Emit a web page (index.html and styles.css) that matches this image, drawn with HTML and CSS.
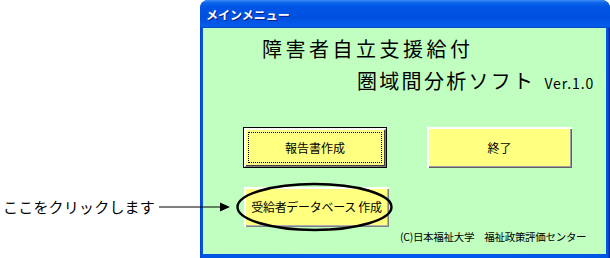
FILE: index.html
```html
<!DOCTYPE html>
<html lang="ja">
<head>
<meta charset="utf-8">
<title>メインメニュー</title>
<link rel="stylesheet" href="styles.css">
</head>
<body>
<div class="stage">
  <div class="window">
    <div class="titlebar"><span class="title">メインメニュー</span></div>
    <div class="client">
      <div class="head1">障害者自立支援給付</div>
      <div class="head2"><span class="head2-text">圏域間分析ソフト</span><span class="ver">Ver.1.0</span></div>
      <div class="btnrow">
        <button class="btn btn-default"><span class="focus">報告書作成</span></button>
        <button class="btn btn-exit">終了</button>
      </div>
      <div class="btnrow2">
        <button class="btn btn-db">受給者データベース 作成</button>
      </div>
      <div class="footer">(C)日本福祉大学　福祉政策評価センター</div>
    </div>
  </div>
  <div class="callout">ここをクリックします</div>
  <svg class="arrow" width="72" height="12" viewBox="0 0 72 12">
    <line x1="0" y1="6" x2="62" y2="6" stroke="#000" stroke-width="1"/>
    <polygon points="61,1.5 71,6 61,10.5" fill="#000"/>
  </svg>
  <svg class="ring" width="160" height="52" viewBox="0 0 160 52">
    <ellipse cx="78.5" cy="25" rx="77" ry="23" fill="none" stroke="#000" stroke-width="2.4"/>
  </svg>
</div>
</body>
</html>
```

FILE: styles.css
```css
html, body {
  margin: 0;
  padding: 0;
  background: #ffffff;
}
body {
  font-family: "Noto Sans CJK JP", "Noto Sans", sans-serif;
  color: #000;
}
.stage {
  position: relative;
  width: 610px;
  height: 258px;
  padding-left: 200px;
  box-sizing: border-box;
  overflow: hidden;
}
.window {
  width: 410px;
  height: 262px;
  display: flex;
  flex-direction: column;
  background: linear-gradient(to right, #0a3fd0 0, #0055e5 2px, #0058ee 50%, #0055e5 calc(100% - 2px), #00138c 100%);
  border-radius: 8px 8px 0 0;
  overflow: hidden;
}
.titlebar {
  height: 28px;
  flex: none;
  display: flex;
  align-items: center;
  padding-left: 6px;
  background: linear-gradient(to bottom, #3c8cf3 0, #0a62ea 3px, #0055e5 7px, #0050e0 18px, #0359e8 24px, #0a5fe8 26px, #0046c8 28px);
  border-radius: 8px 8px 0 0;
}
.title {
  color: #fff;
  font-size: 12px;
  font-weight: bold;
  line-height: 14px;
  text-shadow: 1px 1px 0 #0a1e8a;
  padding-top: 1px;
}
.client {
  flex: none;
  margin: 0 4px 0 3px;
  height: 226px;
  background: #c0ffc0;
  display: flex;
  flex-direction: column;
}
.head1 {
  margin-top: 9px;
  padding-left: 59px;
  font-size: 20px;
  line-height: 24px;
  letter-spacing: 3.5px;
}
.head2 {
  margin-top: 8px;
  padding-left: 154px;
  display: flex;
  align-items: baseline;
  gap: 9px;
  line-height: 24px;
}
.head2-text {
  font-size: 20px;
  letter-spacing: 2.3px;
}
.ver {
  font-size: 14px;
  letter-spacing: 0.9px;
}
.btnrow {
  margin-top: 32px;
  padding-left: 40px;
  display: flex;
  gap: 40px;
}
.btnrow2 {
  margin-top: 19px;
  padding-left: 41px;
  display: flex;
}
.btn {
  font-family: "Noto Sans CJK JP", "Noto Sans", sans-serif;
  font-size: 12px;
  line-height: 14px;
  color: #000;
  background: #ffff80;
  padding: 0;
  margin: 0;
  display: flex;
  align-items: center;
  justify-content: center;
  box-sizing: border-box;
}
.btn-default {
  width: 144px;
  height: 41px;
  border: 1px solid #000;
  box-shadow: inset 1px 1px 0 #fff, inset -1px -1px 0 #808080, inset 2px 2px 0 #fff, inset -2px -2px 0 #404040;
  padding: 4px;
}
.focus {
  flex: 1;
  align-self: stretch;
  display: flex;
  align-items: center;
  justify-content: center;
  border: 1px dotted #000;
}
.btn-exit {
  width: 145px;
  height: 41px;
  border: none;
  box-shadow: inset 2px 2px 0 #ffffff, inset -1px -1px 0 #606060, inset -2px -2px 0 #a0a0a0;
}
.btn-db {
  width: 145px;
  height: 40px;
  border: none;
  box-shadow: inset 2px 2px 0 #ffffff, inset -1px -1px 0 #808080, inset -2px -2px 0 #b0b0b0;
  letter-spacing: -0.3px;
}
.footer {
  margin-top: 3px;
  padding-left: 197px;
  font-size: 10.5px;
  line-height: 14px;
  letter-spacing: -0.3px;
}
.callout {
  position: absolute;
  left: 3px;
  top: 198px;
  font-size: 15px;
  line-height: 18px;
  letter-spacing: 0.2px;
}
.arrow {
  position: absolute;
  left: 159px;
  top: 201px;
}
.ring {
  position: absolute;
  left: 236px;
  top: 182px;
}
```
